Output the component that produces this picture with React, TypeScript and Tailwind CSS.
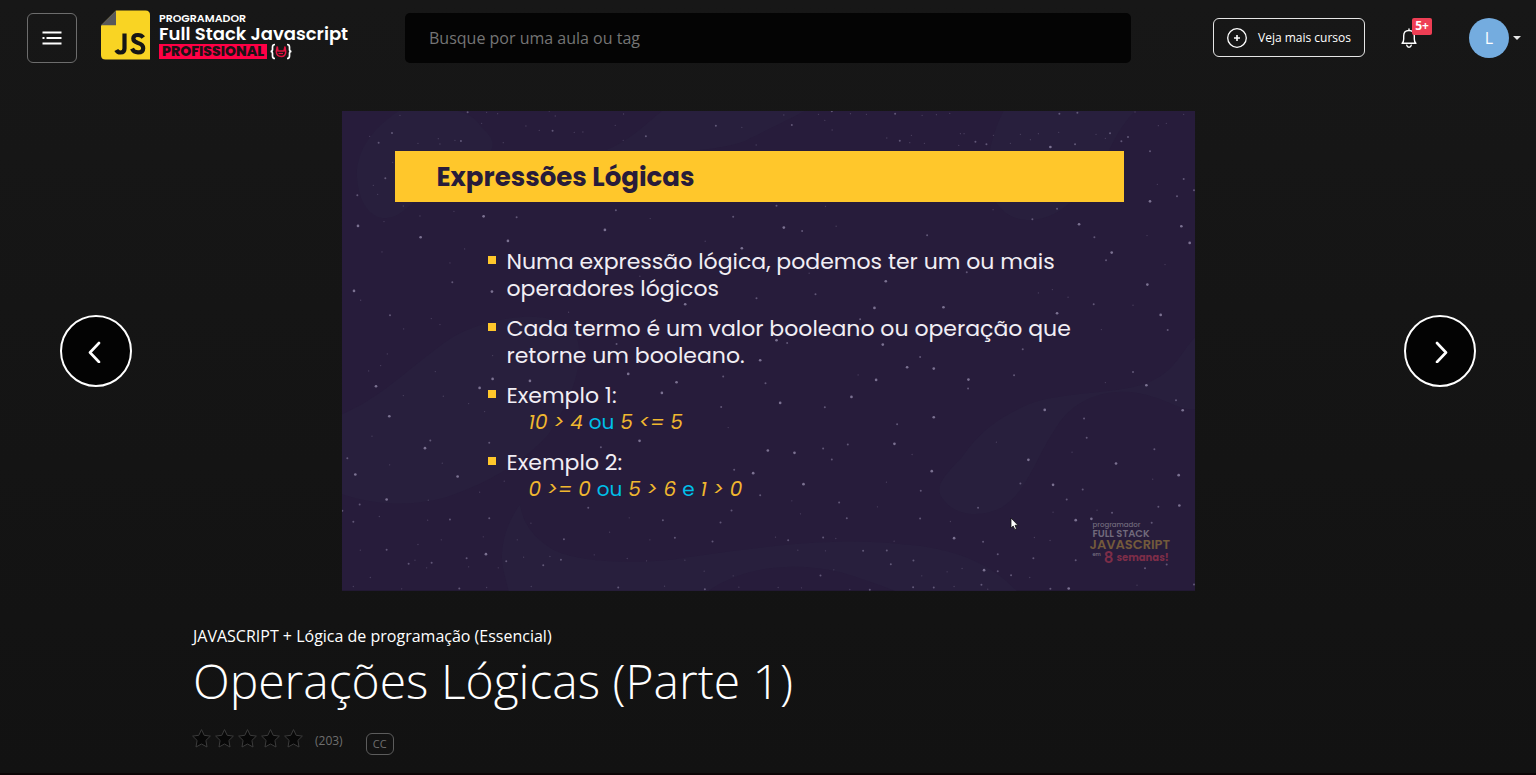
import React from "react";

const POPPINS = "font-[Poppins,Inter,sans-serif]";

type Star = [number, number, number];

/* x, y, brightness (1 faint, 2 medium, 3 bright) */
const topLeftStars: Star[] = [
  [383, 37, 2], [440, 37, 1], [473, 41, 1], [646, 48, 1], [628, 33, 1], [180, 46, 1], [156, 99, 2], [89, 109, 1], [116, 128, 2],
  [295, 116, 1], [300, 132, 1], [345, 121, 1], [363, 123, 2], [234, 130, 1], [425, 70, 1], [490, 128, 1], [598, 91, 1],
  [638, 92, 2], [558, 78, 1], [703, 97, 1], [729, 96, 1], [851, 42, 1], [850, 121, 1], [918, 109, 2], [1128, 77, 2],
  [1206, 82, 1], [1249, 135, 1], [826, 76, 1], [158, 187, 1], [136, 235, 2], [52, 286, 2], [100, 256, 1], [113, 283, 1],
  [190, 318, 1], [342, 334, 1], [240, 348, 1], [431, 349, 3], [530, 352, 2], [132, 365, 1], [54, 378, 3], [242, 412, 3],
  [504, 423, 3], [795, 390, 3], [828, 331, 2], [931, 356, 1], [1180, 350, 2], [1096, 424, 1], [1206, 445, 3], [374, 447, 1],
  [126, 456, 1], [330, 489, 1], [337, 547, 2], [456, 575, 3], [42, 573, 3], [62, 601, 1], [150, 646, 2], [274, 656, 1],
  [191, 687, 1], [300, 674, 1], [686, 637, 1], [1250, 595, 2], [1036, 613, 3], [900, 529, 1], [830, 732, 2],
];
const topRightStars: Star[] = [
  [42, 45, 1], [146, 43, 1], [186, 34, 2], [242, 41, 1], [290, 43, 1], [376, 41, 2], [457, 46, 1], [500, 44, 1], [540, 40, 1],
  [869, 41, 2], [923, 38, 2], [1096, 36, 1], [1242, 43, 1], [66, 75, 2], [165, 61, 1], [187, 90, 1], [351, 114, 1],
  [390, 122, 2], [425, 106, 1], [420, 128, 1], [464, 130, 1], [572, 101, 1], [583, 101, 1], [617, 125, 2], [567, 136, 1],
  [650, 133, 2], [671, 106, 1], [722, 130, 1], [752, 103, 1], [782, 119, 1], [806, 101, 1], [842, 141, 3], [916, 133, 2],
  [867, 97, 1], [979, 103, 1], [1021, 100, 2], [1007, 115, 1], [1055, 124, 2], [1075, 111, 2], [1141, 154, 2], [1190, 70, 1],
  [1166, 77, 1], [1242, 237, 2], [1163, 253, 1], [1222, 289, 2], [1141, 304, 3], [1273, 271, 2], [20, 317, 2], [167, 319, 1],
  [42, 383, 3], [97, 393, 2], [199, 379, 1], [472, 406, 2], [670, 329, 1], [788, 358, 2], [862, 326, 2], [928, 373, 3],
  [974, 412, 2], [1132, 407, 1], [1235, 379, 3], [1260, 429, 3], [1026, 458, 3], [1009, 481, 2], [1186, 494, 1],
  [591, 517, 2], [348, 544, 3], [137, 583, 2], [118, 520, 1], [314, 624, 3], [521, 622, 3], [271, 658, 2], [862, 640, 3],
  [1133, 554, 3], [972, 613, 2], [1090, 616, 1], [1173, 645, 3], [1194, 690, 2], [20, 721, 3], [52, 729, 2], [339, 734, 3],
  [848, 569, 1], [895, 592, 1], [806, 579, 1], [995, 689, 1], [759, 748, 2],
];
const bottomLeftStars: Star[] = [
  [142, 12, 1], [122, 47, 1], [86, 63, 1], [286, 65, 1], [458, 17, 1], [108, 109, 3], [458, 87, 3], [419, 114, 3], [570, 93, 3],
  [865, 72, 3], [1010, 97, 3], [1150, 80, 2], [1261, 31, 3], [1277, 100, 2], [966, 129, 3], [310, 139, 1], [190, 137, 1],
  [148, 199, 3], [386, 161, 1], [434, 185, 1], [1144, 171, 2], [96, 259, 1], [271, 272, 2], [255, 295, 3], [448, 279, 2],
  [899, 273, 3], [783, 292, 2], [1165, 233, 1], [1284, 302, 3], [22, 325, 2], [149, 345, 1], [307, 340, 1], [46, 374, 3],
  [353, 380, 3], [493, 394, 1], [419, 427, 1], [140, 449, 3], [265, 451, 1], [59, 464, 2], [7, 483, 2], [118, 500, 1],
  [40, 516, 2], [1183, 360, 2], [1240, 370, 3], [1261, 436, 2], [1175, 482, 2], [1142, 518, 2], [745, 474, 2], [868, 504, 1],
  [969, 511, 2], [573, 520, 1], [448, 505, 2], [330, 509, 2], [263, 511, 1], [61, 601, 1], [140, 600, 2], [234, 584, 1],
  [304, 570, 1], [438, 613, 3], [430, 561, 1], [532, 570, 1], [672, 568, 2], [1005, 564, 2], [1118, 575, 2], [930, 570, 1],
  [809, 547, 1], [206, 642, 2], [225, 631, 1], [275, 639, 2], [260, 654, 1], [380, 625, 2], [386, 651, 1], [499, 634, 2],
  [475, 654, 1], [551, 622, 1], [630, 620, 1], [663, 630, 2], [610, 646, 2], [763, 615, 1], [862, 626, 1], [920, 633, 1],
  [1035, 631, 1], [91, 683, 1], [40, 710, 1], [185, 717, 1], [358, 716, 2], [440, 713, 1], [574, 710, 1], [835, 713, 2],
  [974, 709, 1], [1095, 718, 2], [1197, 712, 1], [1093, 664, 1], [1180, 678, 1],
];
const bottomRightStars: Star[] = [
  [412, 52, 3], [451, 21, 2], [492, 56, 3], [319, 90, 3], [265, 75, 1], [245, 141, 3], [596, 89, 3], [595, 116, 2], [733, 76, 2],
  [1090, 66, 2], [1007, 98, 1], [1130, 106, 3], [1219, 151, 2], [1239, 181, 3], [31, 159, 3], [165, 172, 2], [825, 180, 3],
  [943, 206, 2], [492, 202, 3], [382, 223, 2], [951, 264, 2], [680, 277, 1], [374, 282, 3], [234, 284, 2], [160, 296, 2],
  [74, 309, 3], [186, 329, 2], [427, 314, 1], [907, 307, 1], [1154, 298, 2], [776, 330, 3], [1039, 341, 3], [486, 364, 3],
  [1227, 376, 3], [1149, 388, 1], [101, 403, 3], [350, 397, 1], [752, 401, 2], [850, 405, 3], [939, 419, 2], [453, 423, 2],
  [891, 449, 2], [1229, 467, 3], [1166, 471, 2], [208, 458, 2], [323, 471, 1], [625, 474, 2], [66, 453, 1], [92, 492, 1],
  [231, 505, 2], [451, 506, 2], [542, 515, 1], [850, 487, 1], [982, 481, 1], [1027, 489, 2], [918, 511, 3], [965, 507, 3],
  [1146, 519, 2], [553, 565, 3], [160, 563, 2], [198, 566, 1], [55, 571, 2], [17, 562, 1], [373, 574, 1], [640, 576, 2],
  [794, 563, 1], [841, 572, 1], [84, 601, 1], [167, 603, 1], [280, 603, 2], [351, 602, 2], [431, 632, 2], [363, 643, 2],
  [684, 613, 2], [791, 625, 2], [918, 631, 2], [643, 661, 3], [684, 664, 2], [577, 656, 1], [532, 666, 1], [152, 677, 2],
  [192, 660, 1], [456, 678, 1], [724, 676, 2], [780, 683, 1], [1126, 655, 2], [1191, 644, 2], [635, 705, 2], [654, 718, 1],
  [553, 710, 1], [492, 713, 2], [430, 712, 2], [300, 720, 2], [240, 719, 1], [842, 717, 2], [897, 716, 3], [1102, 706, 1],
  [95, 714, 1], [25, 713, 1], [1273, 704, 2],
];

const starFields = [
  { transform: "translate(-6 -33)", stars: topLeftStars },
  { transform: "translate(1284 -33)", stars: topRightStars },
  { transform: "translate(-6 717)", stars: bottomLeftStars },
  { transform: "translate(1284 717)", stars: bottomRightStars },
];

function NightSky() {
  return (
    <svg className="absolute inset-0 h-full w-full" viewBox="0 0 2560 1440" preserveAspectRatio="none" aria-hidden="true">
      <rect width="2560" height="1440" fill="#271c3b" />
      <g fill="#281f3d">
        <path d="M170 0C80 60 40 130 45 200C50 270 80 320 130 322C190 320 220 250 330 190C420 140 500 120 420 50C400 20 380 10 350 0Z" />
        <path d="M960 0C900 50 860 90 790 118C900 125 1100 130 1210 90C1290 50 1330 30 1390 0Z" />
        <path d="M1985 0C1940 90 1920 200 1960 270C2010 350 2110 340 2180 280C2300 190 2290 90 2380 0Z" />
        <path d="M0 910C120 860 200 770 330 680C430 620 610 590 690 650C740 720 700 850 620 970C540 1060 430 1120 310 1160C200 1190 90 1180 0 1150Z" />
        <path d="M535 1180C490 1240 470 1320 485 1380L500 1440L1100 1440C1200 1370 1350 1350 1500 1385C1580 1410 1620 1425 1660 1440L2025 1440C1950 1360 1840 1310 1680 1300C1500 1280 1300 1300 1000 1345C860 1360 720 1355 640 1320C570 1280 540 1230 535 1180Z" />
        <path d="M2560 680C2520 720 2500 780 2430 810C2350 850 2160 840 2060 880C1950 930 1910 970 1860 1040C1800 1100 1780 1130 1800 1160C1840 1220 1920 1220 1980 1190C2060 1140 2080 1040 2150 940C2210 850 2330 820 2440 860C2490 875 2520 900 2560 895Z" />
      </g>
      {starFields.map((field) => (
        <g key={field.transform} transform={field.transform} fill="#a99fc0">
          {field.stars.map(([x, y, level]) => (
            <circle key={`${x}-${y}`} cx={x} cy={y} r={level + 1} opacity={level === 3 ? 0.65 : level === 2 ? 0.45 : 0.28} />
          ))}
        </g>
      ))}
    </svg>
  );
}

function Logo() {
  return (
    <a href="#" aria-label="Programador Full Stack Javascript Profissional" className={`flex w-[304px] shrink-0 items-center gap-2 ${POPPINS} font-bold text-white`}>
      <svg className="h-[50px] w-[50px]" viewBox="0 0 50 50" aria-hidden="true">
        <path d="M15 0.500H44.500Q49 0.500 49 5V49.500H4.500Q0 49.500 0 45V15.500Z" fill="#f9d423" />
        <path d="M15 0.500V15.300H0Z" fill="#58585a" />
        <path d="M23.500 23.500V38.500Q23.500 42.500 19.500 42.500Q16.500 42.500 15.300 40" fill="none" stroke="#161616" strokeWidth="4.200" />
        <path d="M42.300 27.500Q40.500 25 37 25Q32.300 25 32.300 28.500Q32.300 31.500 37 33Q42.200 34.500 42.200 38.200Q42.200 42.400 37 42.400Q32.800 42.400 31 38.700" fill="none" stroke="#161616" strokeWidth="4.200" />
      </svg>
      <span className="flex flex-col">
        <span className="text-[11px] leading-[14px] font-semibold">PROGRAMADOR</span>
        <span className="text-[18px] leading-[18px] font-semibold whitespace-nowrap">Full Stack Javascript</span>
        <span className="flex items-center gap-[2px]">
          <span className="bg-[#ff0045] px-[3px] text-[14px] leading-[15px] font-extrabold text-[#1d1216]">PROFISSIONAL</span>
          <svg className="h-[17px] w-6" viewBox="0 0 24 17" fill="none" aria-hidden="true">
            <path d="M6 1.500Q3.500 1.500 3.500 4V6.500Q3.500 8.500 1.500 8.500Q3.500 8.500 3.500 10.500V13Q3.500 15.500 6 15.500" stroke="#fff" strokeWidth="1.700" />
            <path d="M18 1.500Q20.500 1.500 20.500 4V6.500Q20.500 8.500 22.500 8.500Q20.500 8.500 20.500 10.500V13Q20.500 15.500 18 15.500" stroke="#fff" strokeWidth="1.700" />
            <path d="M8.300 3.500L9 8H15L16 3.500L16.700 9Q16.500 13.500 12.300 13.500Q7.500 13.500 7.300 8.500Z" stroke="#e3123f" strokeWidth="1.500" />
            <path d="M9.500 10.500H14" stroke="#e3123f" strokeWidth="1.200" />
          </svg>
        </span>
      </span>
    </a>
  );
}

function Header() {
  return (
    <header className="flex h-[75px] items-center pr-[15px] pl-[27px]">
      <button aria-label="Abrir menu" className="mr-6 flex h-[50px] w-[50px] shrink-0 items-center justify-center rounded-md border border-[#6d6d6d]">
        <svg width="20" height="14" viewBox="0 0 20 14" stroke="#fff" strokeWidth="2" aria-hidden="true">
          <path d="M0.500 1.500H19.500M0.500 7H2.500M4.500 7H19.500M0.500 12.500H19.500" />
        </svg>
      </button>
      <div className="-mt-[5px]">
        <Logo />
      </div>
      <input type="search" aria-label="Buscar" placeholder="Busque por uma aula ou tag" className="h-[50px] min-w-0 flex-1 rounded-[5px] bg-[#040404] px-6 text-[16px] text-white outline-none placeholder:text-[#757575]" />
      <button className="ml-[82px] flex h-[39px] w-[152px] shrink-0 items-center gap-[11px] rounded-md border border-[#e6e6e6] pl-[13px] text-[12px] font-medium whitespace-nowrap text-white">
        <svg width="20" height="20" viewBox="0 0 20 20" fill="none" stroke="#fff" aria-hidden="true">
          <circle cx="10" cy="10" r="9.300" strokeWidth="1.300" />
          <path d="M10 7V13M7 10H13" strokeWidth="1.600" />
        </svg>
        Veja mais cursos
      </button>
      <button aria-label="Notificações" className="relative ml-9 flex h-10 w-4 shrink-0 items-center justify-center">
        <svg width="16" height="20" viewBox="0 0 16 20" fill="none" stroke="#fff" strokeWidth="1.400" strokeLinecap="round" strokeLinejoin="round" aria-hidden="true">
          <path d="M8 1V2M1 15.300H15M1.300 15.300Q2.700 13.500 2.700 11V7.800Q2.700 2.500 8 2.500Q13.300 2.500 13.300 7.800V11Q13.300 13.500 14.700 15.300M5.800 17.300Q6.200 19.200 8 19.200Q9.800 19.200 10.200 17.300" />
        </svg>
        <span className="absolute top-0 left-[11px] flex h-[17px] w-5 items-center justify-center rounded-[2px] bg-[#ee3e54] text-[12px] font-bold">5+</span>
      </button>
      <button aria-label="Conta" className="ml-[52px] flex shrink-0 items-center gap-1">
        <span className="flex h-10 w-10 items-center justify-center rounded-full bg-[#74acdf] text-[16px]">L</span>
        <svg width="8" height="4" viewBox="0 0 8 4" aria-hidden="true">
          <path d="M0 0H8L4 4Z" fill="#e6e6e6" />
        </svg>
      </button>
    </header>
  );
}

function Arrow({ label, points }: { label: string; points: string }) {
  return (
    <button aria-label={label} className="flex h-[72px] w-[72px] shrink-0 items-center justify-center rounded-full border-2 border-white bg-[#030303]">
      <svg width="24" height="24" viewBox="0 0 24 24" fill="none" stroke="#fff" strokeWidth="2.600" strokeLinecap="round" strokeLinejoin="round" aria-hidden="true">
        <polyline points={points} />
      </svg>
    </button>
  );
}

function Bullet({ children }: { children: React.ReactNode }) {
  return (
    <li className="flex gap-[11px]">
      <span className="mt-2 h-2 w-2 shrink-0 bg-[#ffc72b]" />
      <div>{children}</div>
    </li>
  );
}

function Op({ children }: { children: React.ReactNode }) {
  return <span className="text-[#00bfe8] not-italic">{children}</span>;
}

function Slide() {
  return (
    <section aria-label="Vídeo da aula" className={`relative aspect-video w-full max-w-[853px] overflow-hidden ${POPPINS}`}>
      <NightSky />
      <div className="relative pt-10 pr-[71px] pl-[53px]">
        <h2 className="bg-[#ffc72b] pt-[2px] pl-[42px] text-[26px] leading-[49px] font-bold text-[#281c3a]">Expressões Lógicas</h2>
        <ul className="mt-[46px] ml-[93px] flex flex-col gap-[13px] text-[22px] leading-[27px] whitespace-nowrap text-[#f1eef4]">
          <Bullet>
            Numa expressão lógica, podemos ter um ou mais
            <br />
            operadores lógicos
          </Bullet>
          <Bullet>
            Cada termo é um valor booleano ou operação que
            <br />
            retorne um booleano.
          </Bullet>
          <Bullet>
            Exemplo 1:
            <p className="pl-[22px] text-[20px] text-[#f0b72f] italic">
              10 &gt; 4 <Op>ou</Op> 5 &lt;= 5
            </p>
          </Bullet>
          <Bullet>
            Exemplo 2:
            <p className="pl-[22px] text-[20px] text-[#f0b72f] italic">
              0 &gt;= 0 <Op>ou</Op> 5 &gt; 6 <Op>e</Op> 1 &gt; 0
            </p>
          </Bullet>
        </ul>
      </div>
      <div className="absolute right-[26px] bottom-[26px] flex w-[79px] flex-col font-semibold whitespace-nowrap">
        <span className="pl-[3px] text-[7px] leading-[8px] font-medium text-[#716a7c]">programador</span>
        <span className="pl-[3px] text-[10px] leading-[9px] text-[#716a7c]">FULL STACK</span>
        <span className="text-[13px] leading-[13px] text-[#735a3b]">JAVASCRIPT</span>
        <span className="flex items-center gap-[3px] pl-[3px] leading-[14px] text-[#7d2d48]">
          <span className="self-start text-[5px] leading-[8px] text-[#716a7c]">em</span>
          <span className="text-[15px]">8</span>
          <span className="text-[10px] font-bold">semanas!</span>
        </span>
      </div>
      <svg className="absolute top-[406px] left-[668px]" width="9" height="14" viewBox="0 0 9 14" aria-hidden="true">
        <path d="M1 1V11L3.200 9L4.800 12.500L6.500 11.700L5 8.300H8Z" fill="#fff" stroke="#111" strokeWidth="0.800" />
      </svg>
    </section>
  );
}

function Rating() {
  return (
    <div className="flex items-center gap-1" role="img" aria-label="Avaliação">
      {[1, 2, 3, 4, 5].map((n) => (
        <svg key={n} width="19" height="19" viewBox="0 0 19 19" aria-hidden="true">
          <path d="M9.500 0.600L12.200 6.300L18.400 7.100L13.900 11.400L15 18L9.500 15L4 18L5.100 11.400L0.600 7.100L6.800 6.300Z" fill="#080808" stroke="#3c3c3c" strokeLinejoin="round" />
        </svg>
      ))}
    </div>
  );
}

export default function App() {
  return (
    <div className="flex min-h-screen flex-col bg-linear-to-b from-[#171717] to-[#121212] font-['Open_Sans','Noto_Sans',sans-serif] text-white">
      <Header />
      <main className="flex-1">
        <div className="mt-9 flex items-center justify-between px-[60px]">
          <Arrow label="Aula anterior" points="15,4 6,13.500 15,23" />
          <Slide />
          <Arrow label="Próxima aula" points="9,4 18,13.500 9,23" />
        </div>
        <div className="mx-auto mt-[33px] w-3/4 pl-px">
          <p className="text-[16px] leading-6 font-medium">JAVASCRIPT + Lógica de programação (Essencial)</p>
          <h1 className="text-[48px] leading-[66px] font-light">Operações Lógicas (Parte 1)</h1>
          <div className="-ml-px mt-[15px] flex items-start text-[#6f6f6f]">
            <Rating />
            <span className="ml-3 text-[12px] leading-[24px]">(203)</span>
            <span className="mt-1 ml-[23px] flex h-[22px] w-7 items-center justify-center rounded-md border border-[#5c5c5c] text-[11px]">CC</span>
          </div>
        </div>
      </main>
      <div className="h-[2px] bg-[#0c0506]" />
    </div>
  );
}
